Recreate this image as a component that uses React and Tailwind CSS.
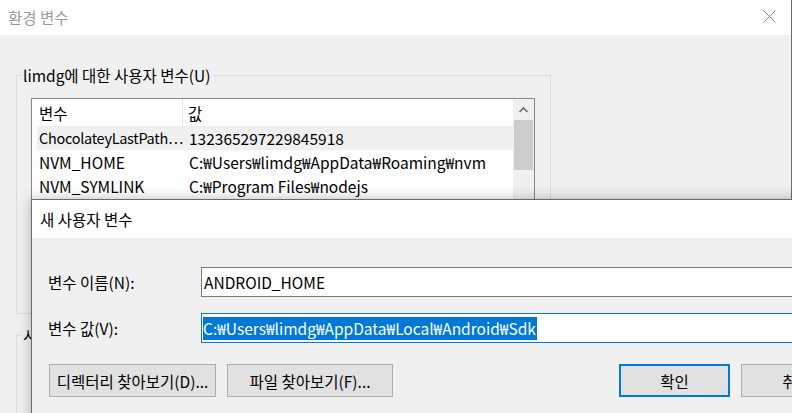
import React from "react";

const font = { fontFamily: '"Noto Sans CJK KR", sans-serif' };

function CloseIcon() {
  return (
    <svg width="13" height="13" viewBox="0 0 13 13" className="block">
      <path d="M0.5 0.5 L12.5 12.5 M12.5 0.5 L0.5 12.5" stroke="#8a8a8a" strokeWidth="1" fill="none" />
    </svg>
  );
}

function ListRow({ name, value, highlight, tight }) {
  return (
    <div className={`flex h-[24px] items-center ml-[5px] ${highlight ? "bg-[#f0f0f0]" : "bg-white"}`}>
      <div className={`w-[146px] shrink-0 pl-[2px] whitespace-nowrap ${tight ? "text-[14.5px] tracking-[-0.3px]" : ""}`}>{name}</div>
      <div className="pl-[6px] whitespace-nowrap">{value}</div>
    </div>
  );
}

function Button({ children, primary, className = "" }) {
  return (
    <div
      className={`h-[33px] shrink-0 flex items-center justify-center bg-[#e1e1e1] whitespace-nowrap ${
        primary ? "border-2 border-[#0078d7]" : "border border-[#adadad]"
      } ${className}`}
    >
      {children}
    </div>
  );
}

export default function App() {
  return (
    <div className="relative w-[792px] h-[413px] overflow-hidden bg-[#f0f0f0] text-[15.5px] text-black leading-[20px]" style={font}>
      {/* Background window: 환경 변수 */}
      <div className="w-[792px] h-[413px] border-r border-[#6e6e6e] bg-[#f0f0f0]">
        <div className="h-[35px] bg-white flex items-center justify-between pl-[8px] pr-[15px]">
          <span className="text-[#9a9a9a] -mt-[1px]">환경 변수</span>
          <div className="-mt-[2px]"><CloseIcon /></div>
        </div>
        <div className="pt-[40px] pl-[16px]">
          {/* user variables group */}
          <div className="relative w-[535px] h-[239px] border border-[#dcdcdc]">
            <span className="absolute left-[5px] -top-[11px] bg-[#f0f0f0] pr-[2px] pl-[1px]">limdg에 대한 사용자 변수(U)</span>
            <div className="ml-[14px] mt-[22px] w-[504px] h-[200px] border border-[#828790] bg-white flex">
              <div className="flex-1">
                <div className="flex h-[27px] items-center bg-white">
                  <div className="w-[151px] h-full pl-[7px] flex items-center border-r border-[#e5e5e5]">변수</div>
                  <div className="pl-[5px]">값</div>
                </div>
                <ListRow name="ChocolateyLastPath…" value="132365297229845918" highlight tight />
                <ListRow name="NVM_HOME" value="C:₩Users₩limdg₩AppData₩Roaming₩nvm" />
                <ListRow name="NVM_SYMLINK" value="C:₩Program Files₩nodejs" />
              </div>
              <div className="w-[21px] shrink-0 bg-[#f0f0f0] flex flex-col items-center">
                <div className="h-[21px] flex items-center justify-center">
                  <svg width="9" height="6" viewBox="0 0 9 6">
                    <path d="M0.5 5 L4.5 1 L8.5 5" stroke="#606060" strokeWidth="1.5" fill="none" />
                  </svg>
                </div>
                <div className="w-[19px] h-[50px] bg-[#cdcdcd]" />
              </div>
            </div>
          </div>
          {/* system variables group */}
          <div className="relative w-[535px] h-[120px] mt-[21px] border border-[#dcdcdc]">
            <span className="absolute left-[5px] -top-[11px] bg-[#f0f0f0] pr-[2px] pl-[1px]">시스템 변수(S)</span>
          </div>
        </div>
      </div>

      {/* Foreground dialog: 새 사용자 변수 */}
      <div className="absolute left-[31px] top-[199px] w-[800px] h-[240px] border border-[#6a6a6a] bg-[#f0f0f0] shadow-[0_0_12px_rgba(0,0,0,0.28)]">
        <div className="h-[38px] bg-white flex items-center pl-[8px]">
          <span className="-mt-[1px]">새 사용자 변수</span>
        </div>
        <div className="pl-[16px] pt-[29px]">
          <div className="flex items-center h-[30px]">
            <div className="w-[153px] shrink-0">변수 이름(N):</div>
            <div className="flex-1 h-[30px] border border-[#7a7a7a] bg-white flex items-center pl-[2px]">ANDROID_HOME</div>
          </div>
          <div className="flex items-center h-[30px] mt-[16px]">
            <div className="w-[153px] shrink-0">변수 값(V):</div>
            <div className="flex-1 h-[30px] border border-[#0078d7] bg-white flex items-center pl-[1px]">
              <span className="bg-[#0078d7] text-white h-[23px] flex items-center whitespace-nowrap pr-[1px]">
                C:₩Users₩limdg₩AppData₩Local₩Android₩Sdk
              </span>
            </div>
          </div>
          <div className="flex mt-[21px] pl-[1px]">
            <Button className="w-[167px]">디렉터리 찾아보기(D)...</Button>
            <Button className="w-[166px] ml-[11px]">파일 찾아보기(F)...</Button>
            <Button primary className="w-[111px] ml-[226px]">확인</Button>
            <Button className="w-[111px] ml-[11px]">취소</Button>
          </div>
        </div>
      </div>
    </div>
  );
}
